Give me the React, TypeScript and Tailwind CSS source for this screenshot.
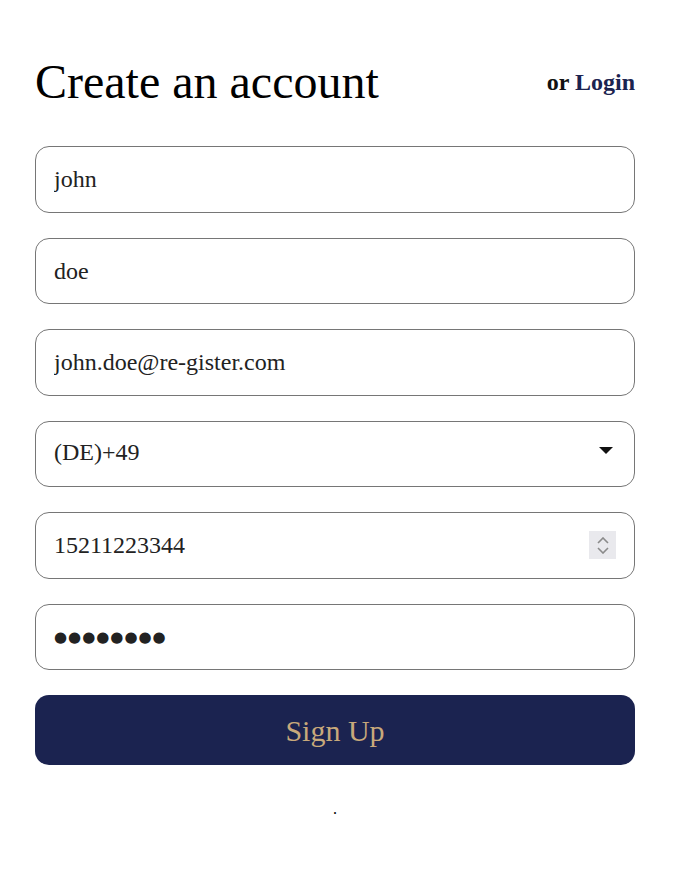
import { useState } from 'react';

const serif = { fontFamily: '"Liberation Serif", "Times New Roman", serif' };

function Field({ children }: { children: React.ReactNode }) {
    return (
        <div className="flex items-center h-[66.5px] w-full rounded-[14px] border border-[#767676] bg-white pl-[18px] pr-[18px]">
            {children}
        </div>
    );
}

export default function App() {
    const [firstName, setFirstName] = useState('john');
    const [lastName, setLastName] = useState('doe');
    const [email, setEmail] = useState('john.doe@re-gister.com');
    const [phone, setPhone] = useState('15211223344');

    const inputClass = 'flex-1 min-w-0 bg-transparent text-[24px] text-[#222] outline-none';

    return (
        <div className="min-h-screen bg-white" style={serif}>
            <div className="ml-[35px] w-[600px] pt-[58px]">
                <div className="flex items-center justify-between h-[48px]">
                    <h1 className="text-[48px] leading-none font-normal text-black">Create an account</h1>
                    <p className="text-[24px] font-bold text-[#111]">
                        or <a href="#" className="text-[#1b2350]">Login</a>
                    </p>
                </div>

                <form className="mt-[40px] flex flex-col gap-[25px]" onSubmit={(e) => e.preventDefault()}>
                    <Field>
                        <input className={inputClass} style={serif} value={firstName} onChange={(e) => setFirstName(e.target.value)} />
                    </Field>
                    <Field>
                        <input className={inputClass} style={serif} value={lastName} onChange={(e) => setLastName(e.target.value)} />
                    </Field>
                    <Field>
                        <input className={inputClass} style={serif} value={email} onChange={(e) => setEmail(e.target.value)} />
                    </Field>
                    <Field>
                        <span className="flex-1 mb-[4px] text-[24px] text-[#222]">(DE)+49</span>
                        <svg width="14" height="8" viewBox="0 0 14 8" className="mr-[3px] mb-[5px]">
                            <path d="M0 0 L14 0 L7 7 Z" fill="#111" />
                        </svg>
                    </Field>
                    <Field>
                        <input className={inputClass} style={serif} value={phone} onChange={(e) => setPhone(e.target.value)} />
                        <div className="flex flex-col items-center justify-center gap-[3px] w-[27px] h-[28px] bg-[#e9e9ed]">
                            <svg width="12" height="7" viewBox="0 0 12 7">
                                <path d="M1 6 L6 1 L11 6" fill="none" stroke="#8a8a8a" strokeWidth="1.6" />
                            </svg>
                            <svg width="12" height="7" viewBox="0 0 12 7">
                                <path d="M1 1 L6 6 L11 1" fill="none" stroke="#8a8a8a" strokeWidth="1.6" />
                            </svg>
                        </div>
                    </Field>
                    <Field>
                        <span
                            className="flex-1 text-[15px] tracking-[1px] text-[#222]"
                            style={{ fontFamily: '"DejaVu Sans", sans-serif' }}
                        >
                            ●●●●●●●●
                        </span>
                    </Field>
                    <button type="submit" className="h-[70px] w-full rounded-[14px] bg-[#1b2350] text-[30px] text-[#c8a97b]" style={serif}>
                        Sign Up
                    </button>
                </form>

                <p className="mt-[32px] text-center text-[16px] text-black">.</p>
            </div>
        </div>
    );
}
